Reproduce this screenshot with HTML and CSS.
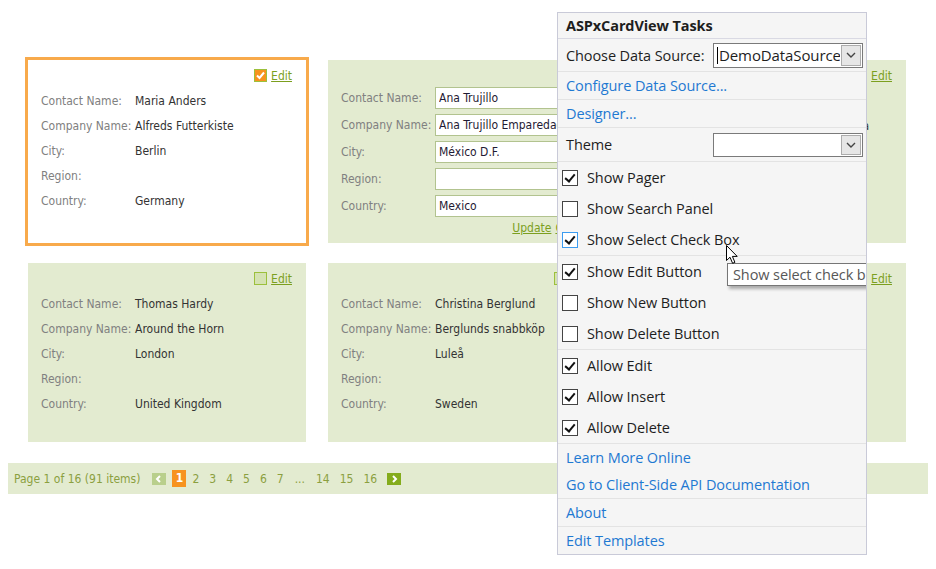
FILE: index.html
```html
<!DOCTYPE html>
<html>
<head>
<meta charset="utf-8">
<title>ASPxCardView</title>
<link rel="stylesheet" href="styles.css">
</head>
<body>
<div class="page">
  <div class="cards">
    <div class="card selected">
      <div class="card-head"><span class="cb cb-on"><svg viewBox="0 0 11 11" width="11" height="11"><path d="M2 5.5 L4.5 8 L9 2.5" fill="none" stroke="#fff" stroke-width="2"/></svg></span><a class="edit">Edit</a></div>
      <div class="fields">
        <span class="lbl">Contact Name:</span><span class="val">Maria Anders</span>
        <span class="lbl">Company Name:</span><span class="val">Alfreds Futterkiste</span>
        <span class="lbl">City:</span><span class="val">Berlin</span>
        <span class="lbl">Region:</span><span class="val"></span>
        <span class="lbl">Country:</span><span class="val">Germany</span>
      </div>
    </div>
    <div class="card editing">
      <div class="form">
        <span class="lbl">Contact Name:</span><input class="inp" type="text" value="Ana Trujillo">
        <span class="lbl">Company Name:</span><input class="inp" type="text" value="Ana Trujillo Emparedados y helados">
        <span class="lbl">City:</span><input class="inp" type="text" value="México D.F.">
        <span class="lbl">Region:</span><input class="inp" type="text" value="">
        <span class="lbl">Country:</span><input class="inp" type="text" value="Mexico">
      </div>
      <div class="form-actions"><a class="edit">Update</a><a class="edit">Cancel</a></div>
    </div>
    <div class="card">
      <div class="card-head"><span class="cb"></span><a class="edit">Edit</a></div>
      <div class="fields">
        <span class="lbl">Contact Name:</span><span class="val">Antonio Moreno</span>
        <span class="lbl">Company Name:</span><span class="val">Antonio Moreno Taquería</span>
        <span class="lbl">City:</span><span class="val">México D.F.</span>
        <span class="lbl">Region:</span><span class="val"></span>
        <span class="lbl">Country:</span><span class="val">Mexico</span>
      </div>
    </div>
    <div class="card">
      <div class="card-head"><span class="cb"></span><a class="edit">Edit</a></div>
      <div class="fields">
        <span class="lbl">Contact Name:</span><span class="val">Thomas Hardy</span>
        <span class="lbl">Company Name:</span><span class="val">Around the Horn</span>
        <span class="lbl">City:</span><span class="val">London</span>
        <span class="lbl">Region:</span><span class="val"></span>
        <span class="lbl">Country:</span><span class="val">United Kingdom</span>
      </div>
    </div>
    <div class="card">
      <div class="card-head"><span class="cb"></span><a class="edit">Edit</a></div>
      <div class="fields">
        <span class="lbl">Contact Name:</span><span class="val">Christina Berglund</span>
        <span class="lbl">Company Name:</span><span class="val">Berglunds snabbköp</span>
        <span class="lbl">City:</span><span class="val">Luleå</span>
        <span class="lbl">Region:</span><span class="val"></span>
        <span class="lbl">Country:</span><span class="val">Sweden</span>
      </div>
    </div>
    <div class="card">
      <div class="card-head"><span class="cb"></span><a class="edit">Edit</a></div>
      <div class="fields">
        <span class="lbl">Contact Name:</span><span class="val">Hanna Moos</span>
        <span class="lbl">Company Name:</span><span class="val">Blauer See</span>
        <span class="lbl">City:</span><span class="val">Mannheim</span>
        <span class="lbl">Region:</span><span class="val"></span>
        <span class="lbl">Country:</span><span class="val">Germany</span>
      </div>
    </div>
  </div>
  <div class="pager">
    <span class="summary">Page 1 of 16 (91 items)</span>
    <span class="pbtn pbtn-off"><svg viewBox="0 0 14 12" width="14" height="12"><path d="M8 3 L5 6 L8 9" fill="none" stroke="#fff" stroke-width="2"/></svg></span>
    <span class="pcur">1</span>
    <a class="pnum">2</a><a class="pnum">3</a><a class="pnum">4</a><a class="pnum">5</a><a class="pnum">6</a><a class="pnum">7</a>
    <span class="pnum pdots">...</span>
    <a class="pnum">14</a><a class="pnum">15</a><a class="pnum">16</a>
    <span class="pbtn pbtn-on"><svg viewBox="0 0 14 12" width="14" height="12"><path d="M6 3 L9 6 L6 9" fill="none" stroke="#fff" stroke-width="2"/></svg></span>
  </div>
</div>

<div class="tasks">
  <div class="t-title">ASPxCardView Tasks</div>
  <div class="t-row t-combo-row t-choose">
    <span>Choose Data Source:</span>
    <div class="combo"><span class="combo-text"><span class="caret"></span>DemoDataSource1</span><span class="combo-btn"><svg viewBox="0 0 10 6" width="10" height="6"><path d="M1 1 L5 5 L9 1" fill="none" stroke="#444" stroke-width="1.4"/></svg></span></div>
  </div>
  <div class="t-group"><a class="t-link">Configure Data Source...</a></div>
  <div class="t-group"><a class="t-link">Designer...</a></div>
  <div class="t-row t-combo-row t-theme">
    <span>Theme</span>
    <div class="combo combo-sm"><span class="combo-text"></span><span class="combo-btn"><svg viewBox="0 0 10 6" width="10" height="6"><path d="M1 1 L5 5 L9 1" fill="none" stroke="#444" stroke-width="1.4"/></svg></span></div>
  </div>
  <div class="t-group">
    <label class="t-check"><span class="pcb on"></span>Show Pager</label>
    <label class="t-check"><span class="pcb"></span>Show Search Panel</label>
    <label class="t-check"><span class="pcb on focus"></span>Show Select Check Box</label>
  </div>
  <div class="t-group">
    <label class="t-check"><span class="pcb on"></span>Show Edit Button</label>
    <label class="t-check"><span class="pcb"></span>Show New Button</label>
    <label class="t-check"><span class="pcb"></span>Show Delete Button</label>
  </div>
  <div class="t-group">
    <label class="t-check"><span class="pcb on"></span>Allow Edit</label>
    <label class="t-check"><span class="pcb on"></span>Allow Insert</label>
    <label class="t-check"><span class="pcb on"></span>Allow Delete</label>
  </div>
  <div class="t-group">
    <a class="t-link">Learn More Online</a>
    <a class="t-link">Go to Client-Side API Documentation</a>
  </div>
  <div class="t-group"><a class="t-link">About</a></div>
  <div class="t-group t-last"><a class="t-link">Edit Templates</a></div>
  <div class="tooltip">Show select check box</div>
</div>

<svg class="cursor" viewBox="0 0 13 20" width="13" height="20"><path d="M0.5 0.5 L0.5 15.5 L4 12.2 L6.6 18.3 L8.9 17.3 L6.4 11.4 L11.2 11.4 Z" fill="#fff" stroke="#000" stroke-width="1" stroke-linejoin="round"/></svg>
</body>
</html>
```

FILE: styles.css
```css
html, body {
  margin: 0;
  padding: 0;
  background: #fff;
}

body {
  position: relative;
  width: 936px;
  height: 569px;
  overflow: hidden;
  font-family: "DejaVu Sans Condensed", "Liberation Sans", sans-serif;
  font-size: 12px;
}

.page {
  width: 920px;
  margin: 8px;
}

.cards {
  display: grid;
  grid-template-columns: repeat(3, 278px);
  column-gap: 22px;
  row-gap: 20px;
  padding: 52px 20px 21px;
}

.card {
  background: #e3ebd0;
  padding: 9px 14px 26px 13px;
}

.card.selected {
  background: #fff;
  outline: 3px solid #f8aa4b;
}

.card-head {
  display: flex;
  justify-content: flex-end;
  align-items: center;
  gap: 4px;
  height: 13px;
  margin-bottom: 6px;
}

.cb {
  box-sizing: border-box;
  width: 13px;
  height: 13px;
  border: 1px solid #9cc03c;
  background: #d5e2b2;
  display: flex;
  align-items: center;
  justify-content: center;
}

.cb-on {
  background: #f7931e;
}

.edit {
  color: #7c9f1e;
  text-decoration: underline;
  line-height: 14px;
}

.fields {
  display: grid;
  grid-template-columns: 94px 1fr;
  grid-auto-rows: 25px;
  align-items: center;
  white-space: nowrap;
}

.lbl {
  color: #808080;
}

.val {
  color: #333;
}

.card.editing {
  padding: 27px 14px 8px 13px;
}

.form {
  display: grid;
  grid-template-columns: 94px 1fr;
  grid-auto-rows: 22px;
  row-gap: 5px;
  align-items: center;
}

.inp {
  box-sizing: border-box;
  width: 157px;
  height: 22px;
  margin: 0;
  padding: 0 3px;
  border: 1px solid #b2c38f;
  background: #fff;
  font: inherit;
  color: #1f1a33;
}

.form-actions {
  display: flex;
  justify-content: flex-end;
  gap: 4px;
  margin-top: 4px;
  height: 14px;
}

.pager {
  display: flex;
  align-items: center;
  height: 31px;
  background: #e3ebd0;
  padding-left: 6px;
  color: #8b9f3f;
}

.summary {
  margin-right: 12px;
}

.pbtn {
  width: 14px;
  height: 12px;
  display: flex;
}

.pbtn-off {
  background: #b9cf8c;
  margin-right: 6px;
}

.pbtn-on {
  background: #84ac1c;
  margin-left: 5px;
}

.pcur {
  background: #f7931e;
  color: #fff;
  font-weight: bold;
  width: 14px;
  height: 17px;
  line-height: 17px;
  text-align: center;
  margin-right: 1px;
}

.pnum {
  padding: 0 5px;
  color: #8b9f3f;
}

.pdots {
  padding: 0 6px;
}

/* Tasks panel */
.tasks {
  position: absolute;
  left: 557px;
  top: 12px;
  width: 310px;
  box-sizing: border-box;
  border: 1px solid #c9cad8;
  background: #f5f5f5;
  overflow: hidden;
  font-family: "Open Sans", "Noto Sans", sans-serif;
  font-size: 14.5px;
  letter-spacing: -0.1px;
  color: #1e1e1e;
}

.t-title {
  height: 25px;
  line-height: 25px;
  padding-left: 8px;
  font-weight: bold;
  border-bottom: 1px solid #d9d9e3;
}

.t-row {
  display: flex;
  align-items: center;
  justify-content: space-between;
  padding: 0 3px 0 8px;
  border-bottom: 1px solid #e3e3e3;
}

.t-choose {
  height: 32px;
}

.t-theme {
  height: 33px;
}

.t-group {
  display: flex;
  flex-direction: column;
  border-bottom: 1px solid #e3e3e3;
}

.t-group.t-last {
  border-bottom: 0;
}

.t-link {
  height: 27px;
  line-height: 28px;
  padding-left: 8px;
  color: #1f79d2;
}

.t-check {
  display: flex;
  align-items: center;
  gap: 9px;
  height: 31px;
  padding-left: 4px;
}

.pcb {
  box-sizing: border-box;
  width: 16px;
  height: 16px;
  border: 1px solid #444;
  background: #fff;
  position: relative;
  flex: none;
}

.pcb.focus {
  border-color: #3c9cf0;
}

.pcb.on::after {
  content: "";
  position: absolute;
  left: 4px;
  top: 1px;
  width: 4px;
  height: 8px;
  border: solid #111;
  border-width: 0 2.5px 2.5px 0;
  transform: rotate(40deg);
}

.combo {
  box-sizing: border-box;
  width: 150px;
  height: 25px;
  border: 1px solid #7a7a7a;
  background: #fff;
  display: flex;
  align-items: stretch;
}

.combo-sm {
  height: 24px;
}

.combo-text {
  flex: 1;
  overflow: hidden;
  white-space: nowrap;
  font-size: 15px;
  line-height: 23px;
  padding-left: 3px;
  display: flex;
  align-items: center;
}

.caret {
  width: 1px;
  height: 17px;
  background: #000;
  margin-right: 1px;
  flex: none;
}

.combo-btn {
  width: 20px;
  margin: 1px;
  box-sizing: border-box;
  border: 1px solid #acacac;
  background: #e6e6e6;
  display: flex;
  align-items: center;
  justify-content: center;
  flex: none;
}

.tooltip {
  position: absolute;
  left: 169px;
  top: 250px;
  height: 23px;
  box-sizing: border-box;
  width: 170px;
  border: 1px solid #767676;
  background: #fff;
  color: #575757;
  line-height: 21px;
  padding-left: 5px;
  white-space: nowrap;
  box-shadow: 2px 3px 3px rgba(0, 0, 0, 0.3);
}

.cursor {
  position: absolute;
  left: 726px;
  top: 245px;
}
```
